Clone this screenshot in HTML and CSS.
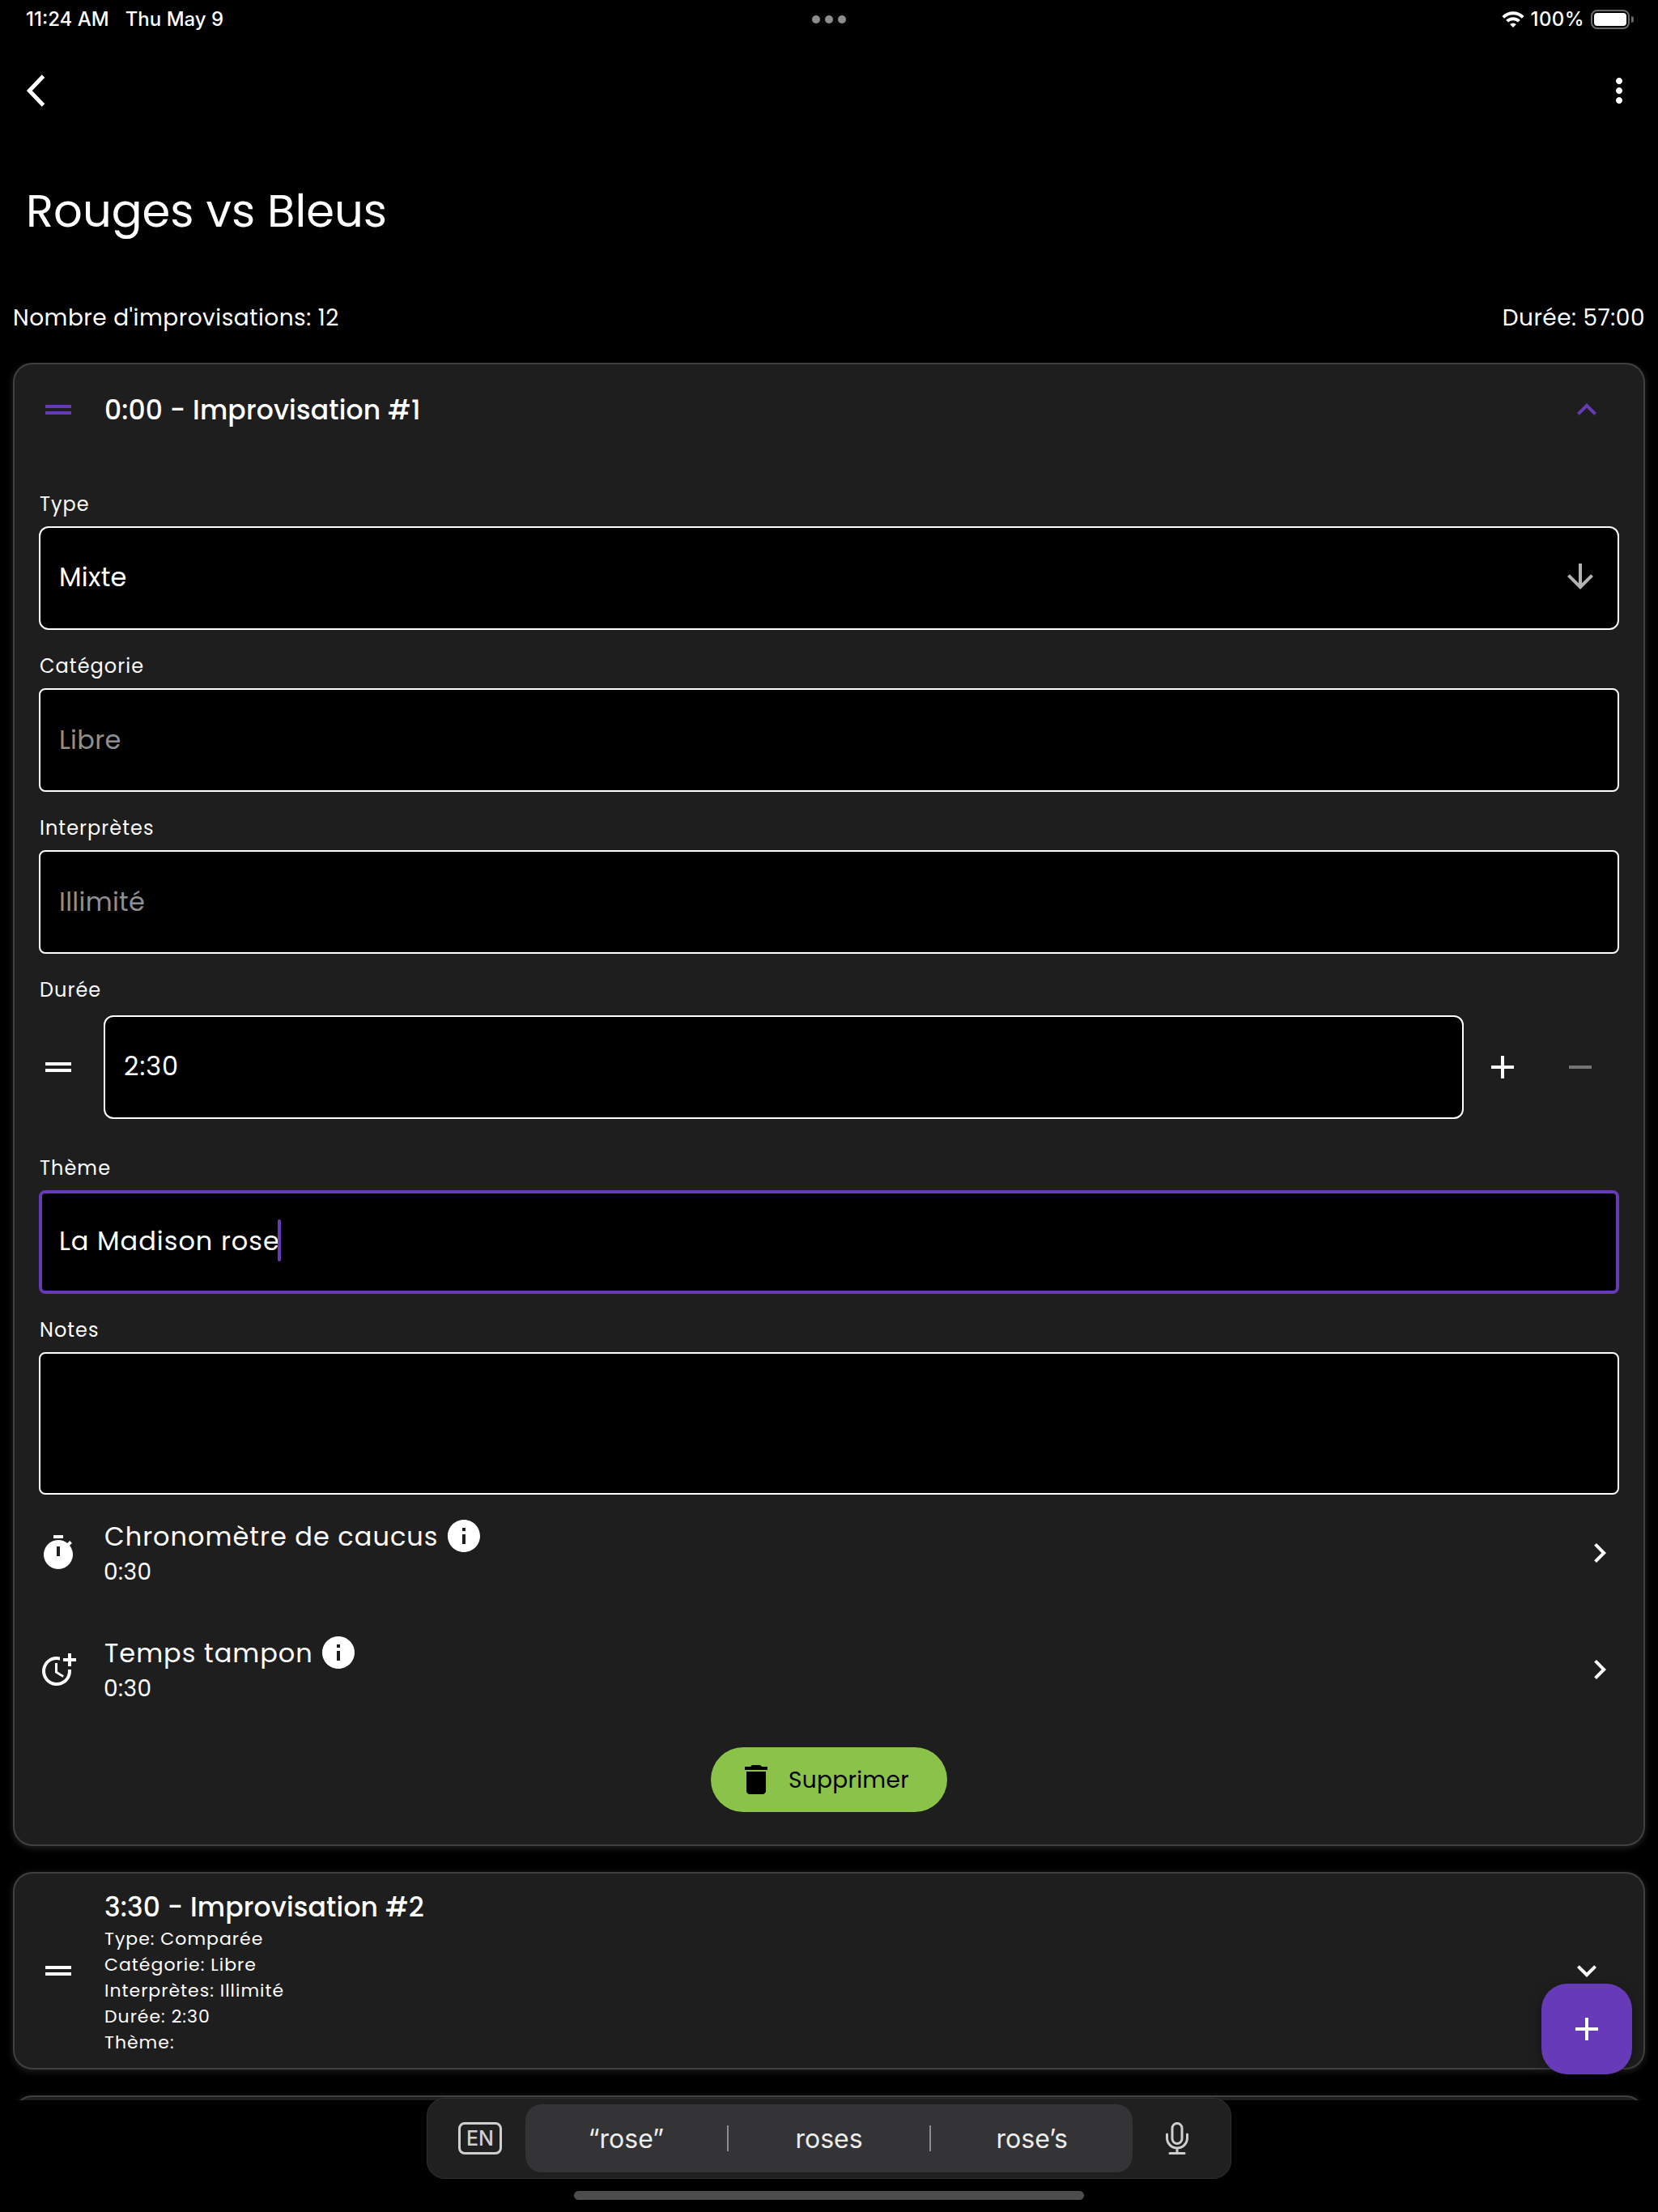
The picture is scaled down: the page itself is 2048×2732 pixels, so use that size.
FILE: index.html
```html
<!DOCTYPE html>
<html lang="fr">
<head>
<meta charset="utf-8">
<title>Rouges vs Bleus</title>
<link rel="stylesheet" href="styles.css">
</head>
<body>
<div class="screen">
  <div class="status">
    <div class="status-left"><span>11:24 AM</span><span>Thu May 9</span></div>
    <div class="status-dots"><i></i><i></i><i></i></div>
    <div class="status-right">
      <svg class="wifi" viewBox="0 0 28 20"><path d="M14 20l-3.9-3.9a5.5 5.5 0 0 1 7.8 0z"/><path class="arc" d="M6.600 12.200a10.500 10.500 0 0 1 14.800 0M1.800 7.300a17.300 17.300 0 0 1 24.400 0"/></svg>
      <span class="percent">100%</span>
      <span class="battery"><span class="battery-fill"></span></span><span class="battery-nub"></span>
    </div>
  </div>
  <div class="appbar">
    <svg class="back" viewBox="0 0 24 40"><path d="M21.500 2L4.300 20l17.200 18"/></svg>
    <svg class="icon" viewBox="0 0 24 24"><path d="M12 8c1.100 0 2-.9 2-2s-.9-2-2-2-2 .9-2 2 .9 2 2 2zm0 2c-1.100 0-2 .9-2 2s.9 2 2 2 2-.9 2-2-.9-2-2-2zm0 6c-1.100 0-2 .9-2 2s.9 2 2 2 2-.9 2-2-.9-2-2-2z"/></svg>
  </div>
  <h1 class="page-title">Rouges vs Bleus</h1>
  <div class="summary"><span>Nombre d'improvisations: 12</span><span>Durée: 57:00</span></div>

  <div class="list">
    <section class="card">
      <header class="card-head">
        <svg class="icon accent" viewBox="0 0 24 24"><path d="M20 9H4v2h16V9zM4 15h16v-2H4v2z"/></svg>
        <h2 class="card-title">0:00 - Improvisation #1</h2>
        <svg class="icon accent" viewBox="0 0 24 24"><path d="M12 8l-6 6 1.410 1.410L12 10.830l4.590 4.580L18 14z"/></svg>
      </header>
      <div class="card-body">
        <div class="field"><label>Type</label>
          <div class="box round"><span>Mixte</span>
            <svg class="icon soft" viewBox="0 0 24 24"><path d="M20 12l-1.410-1.410L13 16.170V4h-2v12.170l-5.580-5.590L4 12l8 8 8-8z"/></svg></div></div>
        <div class="field"><label>Catégorie</label><div class="box hint">Libre</div></div>
        <div class="field"><label>Interprètes</label><div class="box hint">Illimité</div></div>
        <div class="field duration"><label>Durée</label>
          <div class="duration-row">
            <svg class="icon" viewBox="0 0 24 24"><path d="M20 9H4v2h16V9zM4 15h16v-2H4v2z"/></svg>
            <div class="box round typed">2:30</div>
            <svg class="icon" viewBox="0 0 24 24"><path d="M19 13h-6v6h-2v-6H5v-2h6V5h2v6h6v2z"/></svg>
            <svg class="icon off" viewBox="0 0 24 24"><path d="M19 13H5v-2h14v2z"/></svg>
          </div></div>
        <div class="field"><label>Thème</label><div class="box typed focus">La Madison rose<i class="caret"></i></div></div>
        <div class="field last"><label>Notes</label><div class="box tall"></div></div>
        <div class="timer">
          <svg class="icon" viewBox="0 0 24 24"><path d="M9 1h6v2H9z"/><path fill-rule="evenodd" d="M19.030 7.390l1.420-1.420c-.43-.51-.9-.99-1.410-1.410l-1.420 1.420A8.962 8.962 0 0 0 12 4a9 9 0 1 0 7.030 3.390zM13 14h-2V8h2v6z"/></svg>
          <div class="timer-text">
            <div class="timer-name">Chronomètre de caucus<svg class="icon info" viewBox="0 0 24 24"><path d="M12 2C6.480 2 2 6.480 2 12s4.480 10 10 10 10-4.480 10-10S17.520 2 12 2zm1 15h-2v-6h2v6zm0-8h-2V7h2v2z"/></svg></div>
            <div class="timer-value">0:30</div>
          </div>
          <svg class="icon" viewBox="0 0 24 24"><path d="M10 6L8.590 7.410 13.170 12l-4.580 4.590L10 18l6-6z"/></svg>
        </div>
        <div class="timer">
          <svg class="icon" viewBox="0 0 24 24"><path d="M10 8v6l4.700 2.900.8-1.200-4-2.400V8z"/><path d="M17.920 12A6.957 6.957 0 0 1 11 20c-3.900 0-7-3.100-7-7s3.100-7 7-7c.7 0 1.370.1 2 .29V4.230A9 9 0 1 0 20 13c0-.34-.02-.67-.06-1z"/><path d="M20 5V2h-2v3h-3v2h3v3h2V7h3V5z"/></svg>
          <div class="timer-text">
            <div class="timer-name">Temps tampon<svg class="icon info" viewBox="0 0 24 24"><path d="M12 2C6.480 2 2 6.480 2 12s4.480 10 10 10 10-4.480 10-10S17.520 2 12 2zm1 15h-2v-6h2v6zm0-8h-2V7h2v2z"/></svg></div>
            <div class="timer-value">0:30</div>
          </div>
          <svg class="icon" viewBox="0 0 24 24"><path d="M10 6L8.590 7.410 13.170 12l-4.580 4.590L10 18l6-6z"/></svg>
        </div>
        <div class="delete">
          <svg class="icon" viewBox="0 0 24 24"><path d="M6 19c0 1.100.9 2 2 2h8c1.100 0 2-.9 2-2V7H6v12zM19 4h-3.500l-1-1h-5l-1 1H5v2h14V4z"/></svg>
          <span class="delete-label">Supprimer</span>
        </div>
      </div>
    </section>

    <section class="card compact">
      <svg class="icon" viewBox="0 0 24 24"><path d="M20 9H4v2h16V9zM4 15h16v-2H4v2z"/></svg>
      <div class="compact-text">
        <h2 class="card-title">3:30 - Improvisation #2</h2>
        <p>Type: Comparée</p>
        <p>Catégorie: Libre</p>
        <p>Interprètes: Illimité</p>
        <p>Durée: 2:30</p>
        <p>Thème:</p>
      </div>
      <svg class="icon" viewBox="0 0 24 24"><path d="M16.590 8.590L12 13.170 7.410 8.590 6 10l6 6 6-6z"/></svg>
    </section>

    <section class="card compact"></section>
  </div>

  <div class="fab"><svg class="icon" viewBox="0 0 24 24"><path d="M19 13h-6v6h-2v-6H5v-2h6V5h2v6h6v2z"/></svg></div>

  <div class="suggest">
    <div class="lang">EN</div>
    <div class="words"><span class="word">“rose”</span><i></i><span class="word">roses</span><i></i><span class="word">rose’s</span></div>
    <svg class="mic" viewBox="0 0 28 40"><rect x="8" y="1.500" width="12" height="25" rx="6"/><path d="M1.500 15v4.500a12.500 12.500 0 0 0 25 0V15M14 32v6M5 38.500h18"/></svg>
  </div>
  <div class="home"></div>
</div>
</body>
</html>
```
FILE: styles.css
```css
* { box-sizing: border-box; }
body { margin: 0; background: #000; }
h1, h2, p { margin: 0; font-weight: 400; }
svg { display: block; flex: none; }

.screen {
  position: relative;
  width: 2048px;
  height: 2732px;
  overflow: hidden;
  display: flex;
  flex-direction: column;
  color: #fff;
  font-family: Poppins, Inter, "Open Sans", sans-serif;
}
.icon { width: 48px; height: 48px; fill: #fff; }
.accent { fill: #673ab7; }

/* status bar */
.status {
  display: grid;
  grid-template-columns: 1fr auto 1fr;
  align-items: center;
  height: 48px;
  padding: 0 30px 0 32px;
  font: 500 24px/48px Inter, sans-serif;
}
.status-left { display: flex; gap: 20px; }
.status-dots { display: flex; gap: 6px; margin-left: -2px; }
.status-dots i { width: 10px; height: 10px; border-radius: 50%; background: #8e8e8e; }
.status-right { display: flex; justify-content: flex-end; align-items: center; }
.wifi { width: 28px; height: 20px; fill: #fff; margin-right: 8px; }
.wifi .arc { fill: none; stroke: #fff; stroke-width: 4; }
.percent { letter-spacing: .4px; }
.battery { width: 48px; height: 24px; margin-left: 8px; padding: 2px; border: 2px solid #6b6b6b; border-radius: 8px; }
.battery-fill { display: block; height: 16px; border-radius: 4px; background: #fff; }
.battery-nub { width: 3px; height: 8px; margin-left: 2px; border-radius: 0 4px 4px 0; background: #6b6b6b; }

/* top of the page */
.appbar { display: flex; align-items: center; justify-content: space-between; height: 128px; padding: 0 24px 0 32px; }
.back { width: 24px; height: 40px; fill: none; stroke: #fff; stroke-width: 5; }
.page-title { padding-left: 32px; font-size: 56px; line-height: 170px; }
.summary { display: flex; justify-content: space-between; margin-bottom: 8px; padding: 0 16px; font-size: 28px; line-height: 94px; letter-spacing: .5px; }

/* cards */
.list { display: flex; flex-direction: column; gap: 32px; height: 2146px; padding: 0 16px; overflow: hidden; }
.card { flex: none; border: 2px solid #404040; border-radius: 24px; background: #1e1e1e; box-shadow: 0 2px 8px rgba(255, 255, 255, .14); }
.card-head { display: flex; align-items: center; gap: 32px; height: 112px; padding: 0 46px 0 30px; }
.card-title { flex: 1; padding: 1px 0 0 1px; font-size: 33px; font-weight: 500; line-height: 46px; letter-spacing: .15px; }
.card-body { display: flex; flex-direction: column; padding: 41px 30px 40px; }

.field { display: flex; flex-direction: column; gap: 7px; margin-bottom: 25px; }
label { padding-left: 1px; font-size: 24px; line-height: 40px; letter-spacing: 1.05px; }
.box {
  display: flex;
  align-items: center;
  height: 128px;
  padding: 0 22px 2px 23px;
  border: 2px solid #fff;
  border-radius: 8px;
  background: #000;
  font-size: 32px;
  line-height: 48px;
  letter-spacing: .3px;
}
.box.round { flex: 1 0 auto; justify-content: space-between; border-radius: 12px; }
.box.hint { padding-bottom: 0; color: #8f8f8f; }
.box.typed { letter-spacing: 1px; }
.soft { margin-bottom: 2px; fill: #b3b3b3; }
.box.focus { padding: 0 20px 2px 21px; border: 4px solid #673ab7; }
.caret { width: 4px; height: 52px; margin: 0 0 2px -3px; border-radius: 2px; background: #673ab7; }
.tall { height: 176px; }
.field.last { margin-bottom: 0; }
.field.duration { gap: 11px; margin-bottom: 41px; }
.duration-row { display: flex; align-items: center; padding-right: 24px; }
.duration-row .box { margin: 0 24px 0 32px; }
.duration-row .off { margin-left: 48px; fill: #757575; }

.timer { display: flex; align-items: center; gap: 32px; height: 144px; }
.timer-text { flex: 1; }
.timer-name { display: flex; gap: 7px; padding-left: 1px; font-size: 32px; line-height: 48px; letter-spacing: 1px; }
.info { margin-top: -1px; }
.timer-value { font-size: 28px; line-height: 40px; letter-spacing: .5px; }

.delete {
  display: flex;
  align-items: center;
  align-self: center;
  gap: 16px;
  width: 292px;
  height: 80px;
  margin-top: 24px;
  padding-left: 32px;
  border-radius: 40px;
  background: #8bc34a;
  color: #000;
  font-size: 28px;
  letter-spacing: .3px;
}
.delete .icon { fill: #000; }
.delete-label { padding-top: 2px; }

.compact { display: flex; align-items: center; gap: 32px; height: 244px; padding: 0 46px 0 30px; }
.compact-text { flex: 1; padding-top: 3px; font-size: 22px; line-height: 32px; letter-spacing: 1px; }
.compact-text p { padding-left: 1px; }

/* floating layer */
.fab {
  position: absolute;
  left: 1904px;
  top: 2450px;
  display: grid;
  place-items: center;
  width: 112px;
  height: 112px;
  border-radius: 32px;
  background: #673ab7;
  box-shadow: 0 4px 16px rgba(0, 0, 0, .35);
}
.suggest {
  position: absolute;
  left: 527px;
  top: 2591px;
  display: flex;
  align-items: center;
  width: 994px;
  height: 100px;
  padding-left: 38px;
  border: 1px solid #303032;
  border-radius: 22px;
  background: #202020;
  font-family: Inter, sans-serif;
}
.lang { display: grid; place-items: center; width: 54px; height: 40px; border: 3px solid #cfcfcf; border-radius: 8px; color: #cfcfcf; font-size: 25px; font-weight: 500; }
.words { display: flex; align-items: center; width: 750px; height: 84px; margin: 0 41px 0 29px; border-radius: 20px; background: #343436; color: #ededed; font-size: 32px; }
.words i { width: 2px; height: 32px; background: #8b8b8d; }
.word { flex: 1 0 0; text-align: center; }
.mic { width: 28px; height: 40px; fill: none; stroke: #cfcfcf; stroke-width: 3; stroke-linecap: round; }
.home { position: absolute; left: 709px; top: 2706px; width: 630px; height: 11px; border-radius: 6px; background: #4d4d4d; }
```
